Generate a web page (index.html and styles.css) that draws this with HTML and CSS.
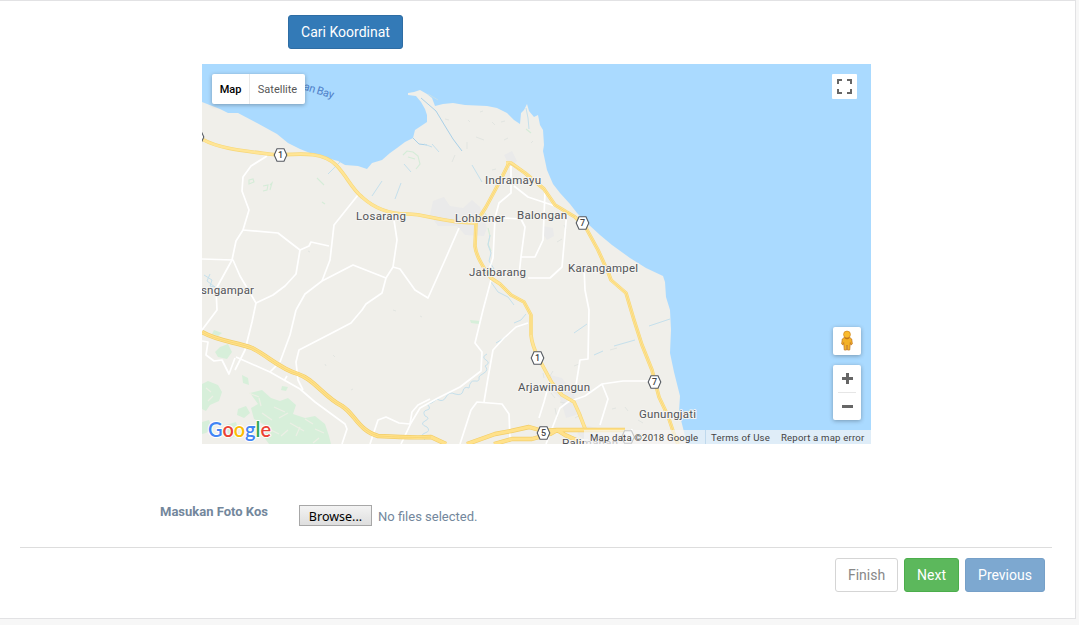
FILE: index.html
```
<!DOCTYPE html>
<html lang="id">
<head>
<meta charset="utf-8">
<title>Data Kos</title>
<link rel="stylesheet" href="styles.css">
</head>
<body>
<main class="panel">
  <button class="btn btn-primary search">Cari Koordinat</button>
  <section class="map">
    <svg class="map-canvas" viewBox="202 64 669 380" width="669" height="380">
      <defs>
        <path id="hex" d="M-3.500-6.200H3.500L6.300 0L3.500 6.200H-3.500L-6.300 0Z"/>
      </defs>
      <rect class="water" x="202" y="64" width="669" height="380"/>
      <path class="land" d="M202 102L220 109L228 113L238 113L257 123L277 134L288 143L300 149L315 155L338 161L345 165L358 166L367 169L372 163L382 160L390 153L397 148L405 142L413 138L415 130L427 122L427 115L425 109L421 102L416 96L408 95L408 93L414 92L420 90L427 94L432 98L435 106L443 104L453 103L465 105L487 106L497 108L507 113L514 120L520 124L521 113L524 110L527 104L529 111L534 117L538 115L540 125L543 130L544 145L543 151L547 170L553 184L560 193L570 204L577 213L588 224L600 235L612 245L630 258L646 268L663 276L665 282L666 297L670 310L671 330L670 353L674 372L680 396L679 412L684 432L687 444H202Z"/>

      <g class="woods">
        <path d="M202 384L208 381L218 385L222 392L219 401L210 405L206 411L202 409Z"/>
        <path d="M220 347l8-3 4 8-5 7-9-2-3-5zM242 375l6 3 1 7-6-2zM238 409l8-3 4 7-6 5-7-3z"/>
        <path d="M250 393L262 390L271 398L280 401L288 398L296 405L293 414L305 418L315 416L325 424L329 436L331 444H269L263 436L265 425L254 419L251 408L258 404Z"/>
        <path d="M202 422l7-2 3 8-6 5-4 1zM214 330l8 3-4 3-6-2zM282 386l6 1-2 4-5-1zM226 425l10-3 3 12-9 5zM470 320l10 1-1 3-8-1z"/>
      </g>
      <path class="soil" d="M249 393l10 4M259 398l2 8M274 407l11 5M279 418l9-5M290 423l14 8M300 427l-4 9M305 419l8 5M315 429l9 4M262 413l10 7M271 430l8 4M281 436l7-6M206 388l5 4M213 396l-5 5M319 438l-6 5"/>
      <path class="urban" d="M433 201L444 197L450 206L463 208L472 200L480 207L487 228L484 236L465 235L457 226L438 226L430 215ZM504 155L512 151L517 161L510 167ZM543 226l10 2 1 8-7 4-4-6zM550 375l12 3 12 16 5 20-13 4-6-20-12-10zM583 425l15 3 10 16-20-2-11-8z"/>

      <g class="greens">
        <path d="M249 180l4-1 1 3-5 2zM263 186l5-1-1 5-4 1M270 185l2-2-2 7M403 155l4-4 6 1 5 4 2 8-4 5M408 157l7 2M488 228l2 8-2 8 3 7M485 213l4 8M317 178l7 7M322 202l3 2M526 129l5 4"/>
      </g>
      <g class="rivers">
        <path class="canal" d="M421 98L436 111L445 126L453 139L462 151M413 138l6 6 8 1"/>
        <path d="M424 144l8 3M432 144l7 8M428 94l10 6M328 174l12-12M382 181l-10 15M401 183l-6 16M404 164l7 8M472 165l10 17M526 108l2 10 1 11"/>
        <path d="M490 235l-2 10 3 8-2 8 5 8M491 282l7 10 10 5 6 8M204 275l8 5-2 6 5 1-8-6 3-7M574 333l13-9M649 326L670 319M594 355l9-4M614 346l21-6"/>
        <path d="M487 354q-6 3-1 6t-1 6q4 4-1 7t-5 4q1 5-4 4t-6 7q-5-2-6 3t-8 3q-6-3-9 3t-9 2q-5 5-10 5 5 5 0 6t-2 6q6 2 0 5t2 6q4 4-2 6t0 7M514 323l7-3 5-6M496 343l10-6"/>
      </g>
      <g class="specks">
        <path d="M308 251l2 1M333 355l2 2M325 364l1 2M351 390l2-1M393 310l3 1M420 316l2 1M445 119l4 1M468 120l2 2M480 112l3-1M476 137l8 3M492 122l3 3M501 122l4-1M504 140l4-2M531 143l2-2M455 155l-3 7M467 142v7M492 170l4-1M574 366l5-2M567 385l7 2M560 402l5 1"/>
        <path d="M564 225l2 5M557 242l5-3M610 350l7-2M625 407l3 4M638 420l5 3M551 393l4 5M555 408l2 10M575 418l7-4M550 376l3-5M543 373l1 5M612 409l4-1"/>
      </g>

      <g class="minor">
        <path d="M267 156L251 166L243 177L242 191L249 210L243 230L236 241L232 260L216 289L217 310L202 330"/>
        <path d="M202 259L233 260L240 276L256 303L252 322L245 350L235 370"/>
        <path d="M243 230L278 233L287 240L300 250L309 246L311 242L329 246"/>
        <path d="M300 250L296 274L285 286L273 295L256 303M296 310L290 335L280 362"/>
        <path d="M358 195L334 225L330 260L322 281"/>
        <path d="M296 310L305 294L322 281L353 265L386 278L382 293L366 304L362 310L351 323L330 334L299 350L296 362L298 380L303 390"/>
        <path d="M386 278L393 267L397 240L394 220M393 267L400 269L415 290L428 298L445 260L459 228"/>
        <path d="M236 357L270 372L300 389L315 402L330 413L345 424L347 429L342 444M202 341L208 342L206 355L214 361L222 360L229 374L235 358M270 372l6-6M284 381l3-5"/>
        <path d="M491 280L483 310L475 343L482 352L481 371L460 387L438 398L420 408L411 423L401 444M528 323L516 327L503 339L493 350L488 378L484 402"/>
        <path d="M460 444L471 410L477 402L502 404L509 414L510 438M511 166L511 193L499 203L495 218L493 258L487 276"/>
        <path d="M514 186L528 197L552 205L567 211L562 267L550 278L528 278M504 218L521 219L525 227L521 257L535 257L543 240L545 192M521 257L519 275"/>
        <path d="M584 265L585 290L589 310L588 359L580 360L576 385M550 380L544 402L539 418M546 444L560 408L568 402L585 396L602 384L623 381L648 381M602 384L608 399L600 425M562 440L588 440M629 444L632 429"/>
        <path d="M370 444L378 420L386 417L399 423L410 424L412 412L418 405L430 399"/>
      </g>

      <g class="highway-case">
        <path d="M202 139C219 149 246 151 276 155C300 154 322 151 336 165C347 176 351 188 362 197C375 209 389 214 407 214C427 214 439 222 475 223"/>
        <path d="M509 163L500 181L486 207L476 223L475 246Q476 256 486 271L491 278L500 284L511 295L524 302L531 315L531 335Q532 345 538 357L552 383L562 395L574 402L579 413L586 431"/>
        <path d="M506 163H511L525 173L544 189L555 205L575 217L586 228L598 250L608 272L611 280L626 293L634 320L642 345L652 370L659 397L668 416L674 434L678 444"/>
      </g>
      <g class="highway">
        <path d="M202 139C219 149 246 151 276 155C300 154 322 151 336 165C347 176 351 188 362 197C375 209 389 214 407 214C427 214 439 222 475 223"/>
        <path d="M509 163L500 181L486 207L476 223L475 246Q476 256 486 271L491 278L500 284L511 295L524 302L531 315L531 335Q532 345 538 357L552 383L562 395L574 402L579 413L586 431"/>
        <path d="M506 163H511L525 173L544 189L555 205L575 217L586 228L598 250L608 272L611 280L626 293L634 320L642 345L652 370L659 397L668 416L674 434L678 444"/>
      </g>
      <g class="toll-case">
        <path d="M202 332C217 341 236 342 252 348C268 356 280 369 298 374C314 379 324 397 342 406C354 413 359 431 378 436C396 437 416 438 431 437L446 444"/>
        <path d="M467 444L495 434L511 431L529 427L543 431L557 430H625M494 444L512 439H532L550 434L557 430L565 435L585 444"/>
      </g>
      <g class="toll">
        <path d="M202 332C217 341 236 342 252 348C268 356 280 369 298 374C314 379 324 397 342 406C354 413 359 431 378 436C396 437 416 438 431 437L446 444"/>
        <path d="M467 444L495 434L511 431L529 427L543 431L557 430H625M494 444L512 439H532L550 434L557 430L565 435L585 444"/>
      </g>
      <g class="centre-line">
        <path d="M202 332C217 341 236 342 252 348C268 356 280 369 298 374C314 379 324 397 342 406C354 413 359 431 378 436C396 437 416 438 431 437"/>
        <path d="M509 163L500 181L486 207L476 223L475 246Q476 256 486 271M500 284L511 295L524 302L531 315L531 335M509 163L525 173L544 189L555 205L575 217M586 228L598 250L608 272L611 280L626 293L634 320L642 345L652 370L659 397L668 416L674 434"/>
      </g>

      <g class="shields">
        <use href="#hex" x="197.500" y="137"/>
        <use href="#hex" x="280.500" y="155"/><use href="#hex" x="582.500" y="223"/>
        <use href="#hex" x="537.500" y="358"/><use href="#hex" x="654.500" y="382"/>
        <use href="#hex" x="543.500" y="433"/><use href="#hex" x="628" y="437"/>
      </g>
      <g class="shield-text">
        <text x="280.500" y="158.300">1</text><text x="582.500" y="226.300">7</text>
        <text x="537.500" y="361.300">1</text><text x="654.500" y="385.300">7</text>
        <text x="543.500" y="436.300">5</text>
      </g>
      <g class="places">
        <text x="485" y="184" textLength="56">Indramayu</text>
        <text x="356" y="220" textLength="50">Losarang</text>
        <text x="455" y="222" textLength="50">Lohbener</text>
        <text x="517" y="219" textLength="50">Balongan</text>
        <text x="469" y="276" textLength="57">Jatibarang</text>
        <text x="568" y="272" textLength="70">Karangampel</text>
        <text x="201" y="294" textLength="53">sngampar</text>
        <text x="518" y="391" textLength="72">Arjawinangun</text>
        <text x="639" y="418" textLength="57">Gunungjati</text>
        <text x="562" y="446.500" textLength="56">Palimanan</text>
      </g>
      <text class="bay" x="303" y="89.500" textLength="31" transform="rotate(17 303 89.500)">an Bay</text>
      <g class="google google-halo"><text x="208" y="437" textLength="63" lengthAdjust="spacingAndGlyphs" class="google-text"><tspan class="blue">G</tspan><tspan class="red">o</tspan><tspan class="yellow">o</tspan><tspan class="blue">g</tspan><tspan class="green">l</tspan><tspan class="red">e</tspan></text></g>
    </svg>
    <div class="map-type"><span class="active">Map</span><span>Satellite</span></div>
    <div class="fullscreen">
      <svg width="15" height="15" viewBox="0 0 15 15"><path d="M1 5V1H5M10 1H14V5M14 10V14H10M5 14H1V10" fill="none" stroke="#666" stroke-width="2"/></svg>
    </div>
    <div class="pegman">
      <svg width="14" height="22" viewBox="0 0 14 22">
        <path d="M4.200 7.500H9.800L11.700 9L12.300 14L11 15L10.300 12.500L9.700 20H7.500L7 15L6.500 20H4.300L3.700 12.500L3 15L1.700 14L2.300 9Z" fill="#f3b126" stroke="#c57a22" stroke-width=".8"/>
        <circle cx="7" cy="4.500" r="3.400" fill="#fabb2d" stroke="#d38b24" stroke-width=".8"/>
        <path d="M4.500 7.800Q7 10 9.500 7.800" fill="none" stroke="#b96c19"/>
      </svg>
    </div>
    <div class="zoom-control">
      <svg width="28" height="55" viewBox="0 0 28 55"><path d="M9 13.500H20M14.500 8V19M9 41.500H20" stroke="#666" stroke-width="3"/><path d="M5 27.500H23" stroke="#e6e6e6"/></svg>
    </div>
    <div class="credits"><span>Map data ©2018 Google</span><span class="terms">Terms of Use</span><span class="report">Report a map error</span></div>
  </section>
  <div class="upload">
    <label class="upload-label">Masukan Foto Kos</label>
    <button class="browse">Browse...</button>
    <span class="file-status">No files selected.</span>
  </div>
  <footer class="actions">
    <button class="btn btn-default">Finish</button>
    <button class="btn btn-success">Next</button>
    <button class="btn btn-previous">Previous</button>
  </footer>
</main>
</body>
</html>
```

FILE: styles.css
```
* { box-sizing: border-box; }
body { margin: 0; height: 625px; overflow: hidden; background: #f7f7f7; font-family: Roboto, sans-serif; color: #73879c; }
.panel { display: flow-root; width: 1076px; height: 619px; background: #fff; border: 1px solid #e2e2e4; border-left: 0; }
.btn { display: flex; align-items: center; justify-content: center; height: 34px; padding: 0; border: 1px solid; border-radius: 3px; font: 14px Roboto, sans-serif; }
.btn-primary { background: #337ab7; border-color: #2e6da4; color: #fff; }
.search { width: 115px; margin: 14px 0 0 288px; }
.map { position: relative; width: 669px; height: 380px; margin: 15px 0 0 202px; overflow: hidden; }
.map-canvas { display: block; }
.water { fill: #aadaff; }
.land { fill: #f0efea; }
.woods { fill: #d7efda; }
.soil { fill: none; stroke: #ecefe5; stroke-width: 1.2; }
.urban { fill: #eaeaea; }
.greens { fill: none; stroke: #d5ecd8; stroke-width: 1.1; }
.rivers { fill: none; stroke: #c5e0ec; stroke-width: 1; stroke-linejoin: round; }
.canal { stroke: #a9d0e8; }
.specks { fill: none; stroke: #e2e5e1; }
.minor { fill: none; stroke: #fff; stroke-width: 1.7; stroke-linejoin: round; }
.highway-case, .highway, .toll-case, .toll, .centre-line { fill: none; stroke-linejoin: round; }
.highway-case { stroke: #f7d778; stroke-width: 3.6; }
.highway { stroke: #ffe596; stroke-width: 2.4; }
.toll-case { stroke: #f2cd68; stroke-width: 4.4; }
.toll { stroke: #ffe18a; stroke-width: 3.2; }
.centre-line { stroke: #f6d36d; stroke-width: .7; }
.shields { fill: #fff; stroke: #555a61; stroke-width: 1.1; }
.shield-text { fill: #444; font: 500 9px Roboto, sans-serif; text-anchor: middle; }
.places { fill: #515357; stroke: #f5f4f1; stroke-width: 2px; paint-order: stroke; font: 11.5px Roboto, sans-serif; }
.bay { fill: #4f80c8; font: 11px Roboto, sans-serif; }
.google { font: 600 21.500px Lato, sans-serif; stroke: #fff; stroke-width: 2px; paint-order: stroke; stroke-linejoin: round; }
.blue { fill: #4285f4; }
.red { fill: #ea4335; }
.yellow { fill: #fbbc05; }
.green { fill: #34a853; }
.map-type, .fullscreen, .pegman, .zoom-control { position: absolute; background: #fff; border-radius: 2px; box-shadow: 0 1px 4px rgba(0,0,0,.3); }
.map-type { left: 10px; top: 10px; display: flex; width: 93px; height: 30px; color: #565656; font-size: 11px; line-height: 31px; }
.map-type span { width: 55px; text-align: center; }
.map-type .active { width: 38px; border-right: 1px solid #e9e9e9; color: #000; font-weight: 500; }
.fullscreen { right: 14px; top: 10px; display: grid; place-items: center; width: 25px; height: 25px; box-shadow: none; border-radius: 1px; }
.pegman { right: 10px; top: 263px; display: grid; place-items: center; width: 28px; height: 28px; }
.zoom-control { right: 10px; top: 301px; width: 28px; height: 55px; }
.zoom-control svg { display: block; }
.credits { position: absolute; right: 0; bottom: 0; display: flex; width: 287px; height: 14px; background: rgba(245,245,245,.7); color: #444; font-size: 9.600px; letter-spacing: .18px; line-height: 15px; white-space: nowrap; }
.credits span { width: 121px; padding-left: 6px; }
.credits .terms { width: 71px; padding-left: 5px; border-left: 1px solid #bfd9ed; }
.credits .report { width: 95px; padding-left: 5px; }
.upload { display: flex; height: 104px; padding: 61px 0 0 160px; font-size: 13px; }
.upload-label { width: 139px; font-weight: 700; line-height: 14px; }
.browse { width: 73px; height: 21px; padding: 0 0 1px; border: 1px solid #a7a7a7; background: linear-gradient(#f3f3f3, #dedede); color: #000; font: 12.500px "Noto Sans", sans-serif; line-height: 21px; }
.file-status { margin-left: 6px; line-height: 24px; }
.actions { display: flex; justify-content: flex-end; gap: 6px; width: 1032px; margin: -1px 0 0 20px; padding: 10px 7px 0 0; border-top: 1px solid #ddd; }
.btn-default { width: 63px; background: #fff; border-color: #d5d5d5; color: #888; }
.btn-success { width: 55px; background: #5cb85c; border-color: #4cae4c; color: #fff; }
.btn-previous { width: 80px; background: #7da8d0; border-color: #76a0c8; color: #fff; }
```
